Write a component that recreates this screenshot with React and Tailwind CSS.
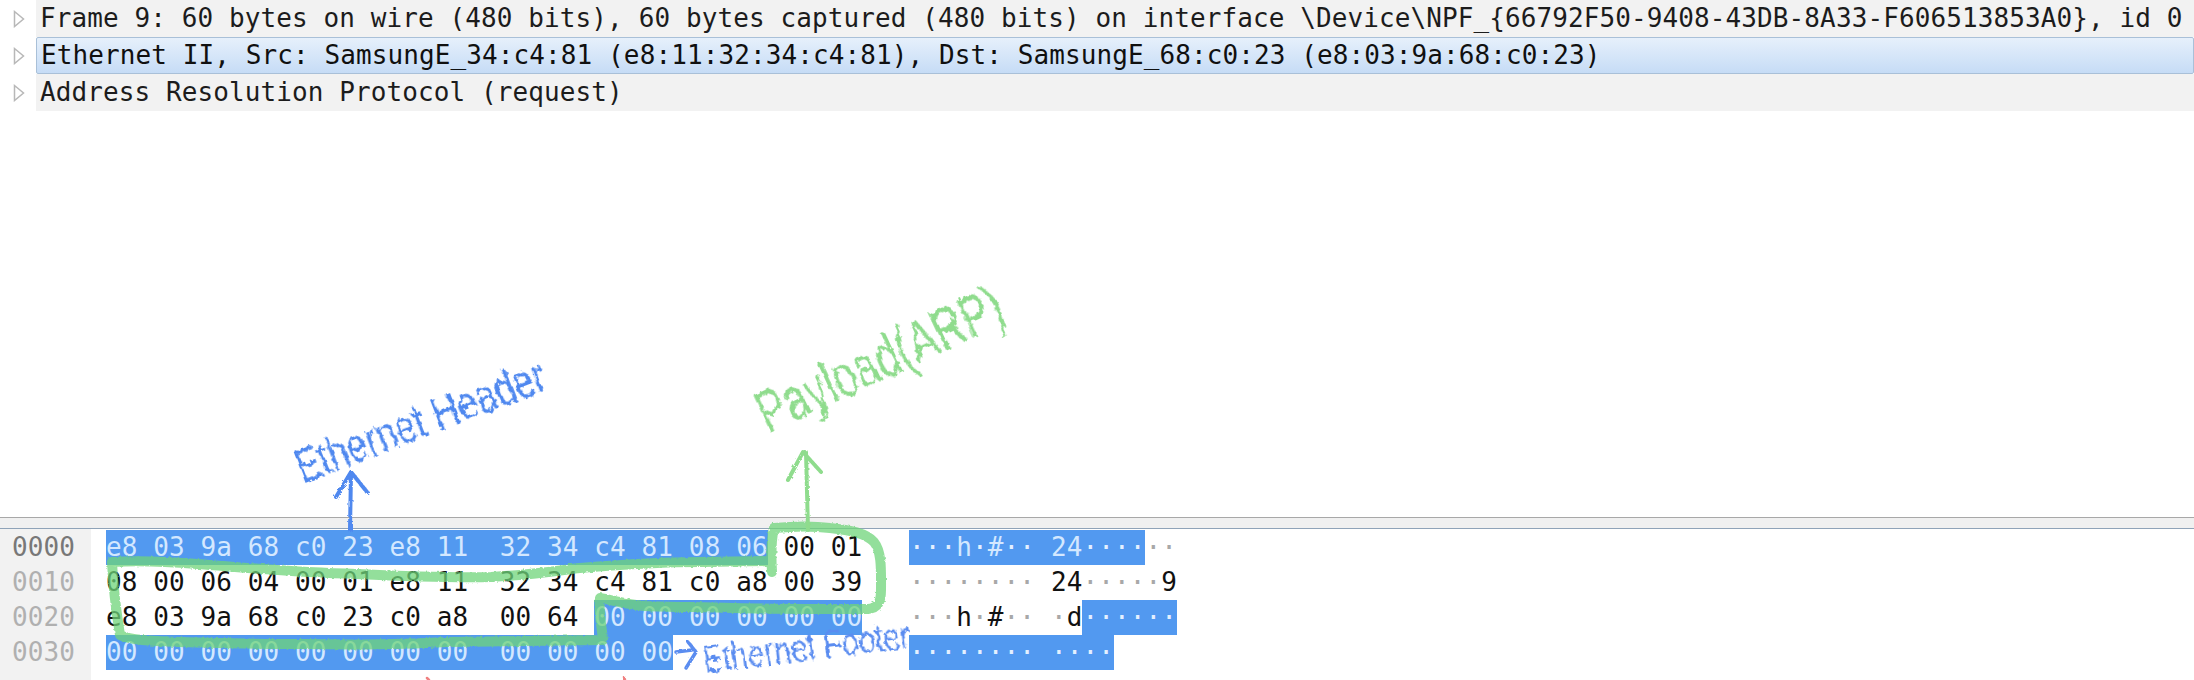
import React from "react";

const mono = "font-['DejaVu_Sans_Mono',monospace] text-[26px] leading-[35px] whitespace-pre tracking-[0.1px]";
const pen = "absolute origin-center font-['Liberation_Sans',sans-serif] leading-none whitespace-nowrap [filter:url(#chalk)]";

const treeRows = [
  { text: "Frame 9: 60 bytes on wire (480 bits), 60 bytes captured (480 bits) on interface \\Device\\NPF_{66792F50-9408-43DB-8A33-F606513853A0}, id 0" },
  { text: "Ethernet II, Src: SamsungE_34:c4:81 (e8:11:32:34:c4:81), Dst: SamsungE_68:c0:23 (e8:03:9a:68:c0:23)", selected: true },
  { text: "Address Resolution Protocol (request)" },
];

// each line: [plain/selected segment, selected?]
const hexRows = [
  { offset: "0000", faded: false, hex: [["e8 03 9a 68 c0 23 e8 11  32 34 c4 81 08 06", true], [" 00 01", false]] },
  { offset: "0010", faded: true, hex: [["08 00 06 04 00 01 e8 11  32 34 c4 81 c0 a8 00 39", false]] },
  { offset: "0020", faded: true, hex: [["e8 03 9a 68 c0 23 c0 a8  00 64 ", false], ["00 00 00 00 00 00", true]] },
  { offset: "0030", faded: true, hex: [["00 00 00 00 00 00 00 00  00 00 00 00", true]] },
];

const asciiRows = [
  [["···h·#·· 24····", true], ["··", false]],
  [["········ 24·····9", false]],
  [["···h·#·· ·d", false], ["······", true]],
  [["········ ····", true]],
];

const Dotted = ({ text, selected }) =>
  text.split("").map((c, i) =>
    c === "·" ? (
      <span key={i} className={selected ? "text-[#e4f0ff]" : "text-[#a8a8a8]"}>{c}</span>
    ) : (
      <span key={i}>{c}</span>
    )
  );

const Triangle = () => (
  <svg width="12" height="18" viewBox="0 0 12 18" className="shrink-0">
    <path d="M1.5 1.5 L10.5 9 L1.5 16.5 Z" fill="#fff" stroke="#b8b8b8" strokeWidth="1.5" />
  </svg>
);

const TreeRow = ({ text, selected }) => (
  <div className="flex items-center h-[37px]">
    <div className="w-[36px] flex justify-center pl-[2px] shrink-0">
      <Triangle />
    </div>
    <div
      className={
        selected
          ? `flex-1 h-[37px] pl-[4px] flex items-center rounded-[2px] border border-[#a9c0d8] bg-gradient-to-b from-[#e6f0fb] to-[#c6dcf6] text-[#101010] ${mono}`
          : `flex-1 h-[37px] pl-[4px] flex items-center bg-[#f2f2f2] text-[#1c1c1c] ${mono}`
      }
    >
      {text}
    </div>
  </div>
);

const Annotations = () => (
  <svg width="2194" height="680" viewBox="0 0 2194 680" className="absolute left-0 top-0 pointer-events-none">
    <defs>
      <filter id="rough" x="-5%" y="-5%" width="110%" height="110%">
        <feTurbulence type="fractalNoise" baseFrequency="0.35" numOctaves="2" seed="4" />
        <feDisplacementMap in="SourceGraphic" scale="3" />
      </filter>
      <filter id="chalk" x="-5%" y="-10%" width="110%" height="120%">
        <feTurbulence type="fractalNoise" baseFrequency="0.18" numOctaves="3" seed="9" />
        <feDisplacementMap in="SourceGraphic" scale="6" />
      </filter>
    </defs>
    <g filter="url(#rough)" fill="none" strokeLinecap="round" strokeLinejoin="round">
      {/* payload outline */}
      <path
        d="M772 572 C771 556 771 540 774 528 C795 526 815 526 830 528 C850 530 866 533 874 542 C882 552 881 570 881 590 C881 602 878 608 868 609 C840 609 780 609 734 608 C700 607 670 607 645 606 C625 604 612 600 600 598 C598 610 602 628 603 640 C560 641 500 641 446 642 C400 645 360 645 300 644 C250 644 210 643 178 642 C150 641 130 640 120 635 C116 610 113 585 112 562 C150 560 185 563 223 566 C270 570 315 573 357 574 C400 576 450 578 491 577 C530 575 555 571 580 568 C630 564 680 562 700 562 L770 561"
        stroke="#6fd47a"
        strokeOpacity="0.75"
        strokeWidth="10"
      />
      {/* blue arrow */}
      <path d="M350 530 L351 472 M336 497 L351 472 L367 492" stroke="#4f88ef" strokeWidth="4" />
      {/* green arrow */}
      <path d="M808 530 L806 452 M788 480 L803 452 L821 472" stroke="#8fdc8d" strokeWidth="4" />
      {/* footer arrow */}
      <path d="M676 652 L692 650 M688 642 L696 652 L686 668" stroke="#5a8cf0" strokeWidth="3.5" />
      {/* stray marks cut off at the bottom */}
      <path d="M427 678 L429 680 M624 677 L625 680" stroke="#f08080" strokeWidth="2.5" />
    </g>
  </svg>
);

const App = () => {
  return (
    <div className="relative w-[2194px] h-[680px] overflow-hidden bg-white">
      <div className="flex flex-col">
        {treeRows.map((r) => (
          <TreeRow key={r.text} text={r.text} selected={r.selected} />
        ))}
      </div>

      {/* empty part of the tree pane */}
      <div className="h-[406px]" />

      <div className="h-[1px] bg-[#a8a8a8]" />
      <div className="h-[10px] bg-[#f0f0f0]" />
      <div className="h-[1px] bg-[#8fa3b8]" />

      <div className="flex">
        <div className={`w-[91px] h-[152px] bg-[#f2f2f2] pl-[12px] pt-[1px] ${mono}`}>
          {hexRows.map((r) => (
            <div key={r.offset} className={r.faded ? "text-[#b0b0b0]" : "text-[#787878]"}>
              {r.offset}
            </div>
          ))}
        </div>

        <div className={`w-[818px] pl-[15px] pt-[1px] text-[#111] ${mono}`}>
          {hexRows.map((r) => (
            <div key={r.offset} className="h-[35px]">
              {r.hex.map(([t, sel], i) => (
                <span key={i} className={sel ? "inline-block h-[35px] bg-[#5299f0] text-[#d4e8ff]" : ""}>
                  {t}
                </span>
              ))}
            </div>
          ))}
        </div>

        <div className={`pt-[1px] text-[#111] ${mono}`}>
          {asciiRows.map((row, n) => (
            <div key={n} className="h-[35px]">
              {row.map(([t, sel], i) => (
                <span key={i} className={sel ? "inline-block h-[35px] bg-[#5299f0] text-[#d4e8ff]" : ""}>
                  <Dotted text={t} selected={sel} />
                </span>
              ))}
            </div>
          ))}
        </div>
      </div>

      <Annotations />

      <span className={`${pen} left-[288px] top-[403px] -rotate-[21deg] scale-y-[1.35] text-[36px] text-[#4f88ef]`}>
        Ethernet Header
      </span>
      <span className={`${pen} left-[747px] top-[339px] -rotate-[25deg] scale-y-[1.4] text-[42px] text-[#8fdc8d]`}>
        Payload(ARP)
      </span>
      <span className={`${pen} left-[702px] top-[632px] -rotate-[7deg] scale-y-[1.3] text-[30px] text-[#5a8cf0]`}>
        Ethernet Footer
      </span>
    </div>
  );
};

export default App;
